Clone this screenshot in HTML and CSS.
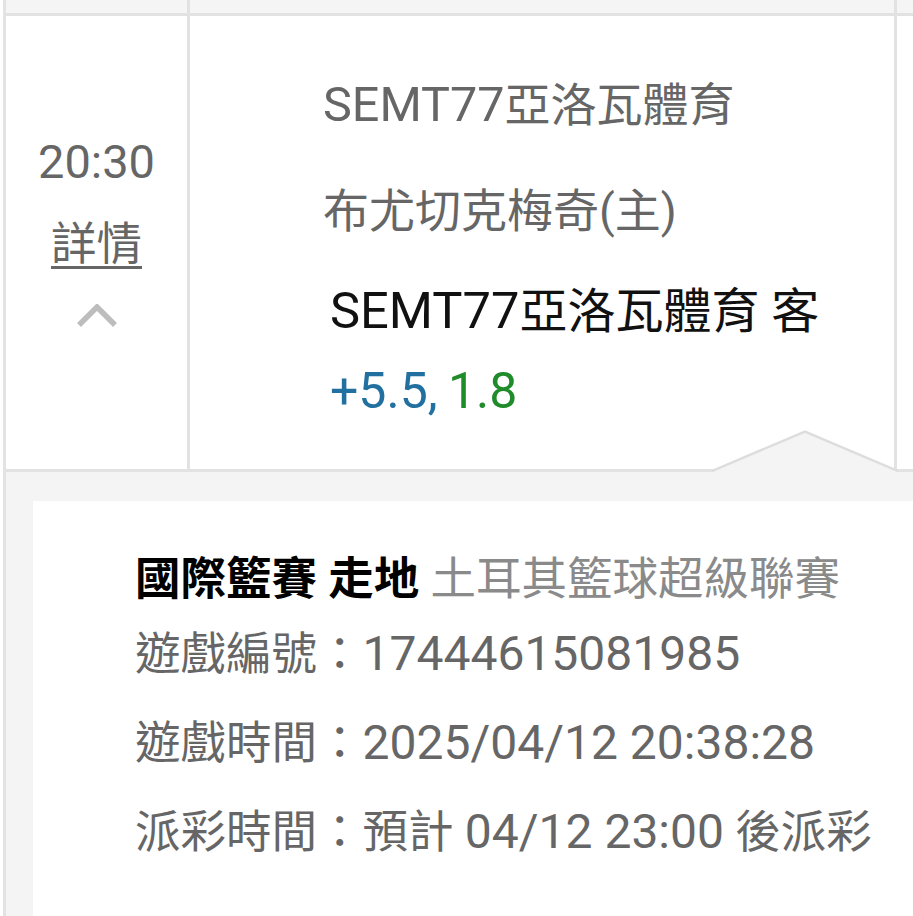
FILE: index.html
```html
<!DOCTYPE html>
<html lang="zh-TW">
<head>
    <meta charset="UTF-8">
    <meta name="viewport" content="width=device-width, initial-scale=1.0">
    <title>注單詳情</title>
    <link rel="stylesheet" href="styles.css">
</head>
<body>
    <div class="list">
        <div class="row row-prev">
            <div class="cell cell-time"></div>
            <div class="cell cell-bet"></div>
        </div>

        <div class="row row-open">
            <div class="cell cell-time">
                <div class="time">20:30</div>
                <a class="detail-link" href="#">詳情</a>
                <svg class="toggle" width="40" height="24" viewBox="0 0 40 24">
                    <polyline points="2,21 20,3 38,21" fill="none" stroke="#bdbdbd" stroke-width="5.5"/>
                </svg>
            </div>
            <div class="cell cell-bet">
                <div class="match">
                    <div class="team"><span class="lat">SEMT77</span>亞洛瓦體育</div>
                    <div class="team team-home">布尤切克梅奇(主)</div>
                </div>
                <div class="pick"><span class="lat">SEMT77</span>亞洛瓦體育 客</div>
                <div class="odds"><span class="handicap">+5.5,</span> <span class="price">1.8</span></div>
            </div>
        </div>

        <div class="detail">
            <svg class="notch" width="186" height="42" viewBox="0 0 186 42">
                <polygon points="0,42 93,1 186,42" fill="#f4f4f4"/>
                <polyline points="0,41 93,1.5 186,41" fill="none" stroke="#dddddd" stroke-width="2.5"/>
            </svg>
            <div class="detail-card">
                <div class="detail-title">
                    <b>國際籃賽 走地</b> <span class="league">土耳其籃球超級聯賽</span>
                </div>
                <div class="detail-line">遊戲編號：<span class="lat">17444615081985</span></div>
                <div class="detail-line">遊戲時間：<span class="lat">2025/04/12 20:38:28</span></div>
                <div class="detail-line">派彩時間：預計 <span class="lat">04/12 23:00</span> 後派彩</div>
            </div>
        </div>
    </div>
</body>
</html>
```

FILE: styles.css
```css
* {
    margin: 0;
    padding: 0;
    box-sizing: border-box;
}

body {
    width: 913px;
    height: 916px;
    overflow: hidden;
    background: #fff;
    font-family: Roboto, "Noto Sans CJK TC", sans-serif;
    color: #666;
}

/* latin runs render a touch larger than the CJK glyphs */
.lat {
    font-size: 1.055em;
}

.list {
    margin-left: 3px;
    border-left: 3px solid #e3e3e3;
    min-height: 916px;
    display: flex;
    flex-direction: column;
}

.row {
    display: grid;
    grid-template-columns: 184px 707px 1fr;
    border-bottom: 3px solid #e2e2e2;
}

.cell {
    border-right: 3px solid #e2e2e2;
}

.row-prev {
    height: 16px;
    background: #f5f5f5;
}

/* left column */
.row-open .cell-time {
    display: flex;
    flex-direction: column;
    align-items: center;
    padding-top: 116px;
}

.time {
    font-size: 47px;
    line-height: 60px;
}

.detail-link {
    margin-top: 23px;
    font-size: 45.5px;
    line-height: 60px;
    color: #666;
    text-decoration: underline;
    text-decoration-thickness: 3px;
    text-underline-offset: 6px;
}

.toggle {
    margin-top: 29px;
}

/* bet column */
.cell-bet {
    padding: 59px 0 48px 133px;
}

.team {
    font-size: 46px;
    line-height: 60px;
}

.team-home {
    margin-top: 46px;
}

.pick {
    margin-top: 40px;
    padding-left: 7px;
    font-size: 48px;
    line-height: 60px;
    color: #111;
}

.odds {
    margin-top: 19px;
    padding-left: 7px;
    font-size: 50px;
    line-height: 60px;
    word-spacing: -2px;
}

.handicap {
    color: #21709f;
}

.price {
    color: #1f8b2a;
}

/* expanded detail */
.detail {
    position: relative;
    flex: 1;
    background: #f4f4f4;
    padding: 29px 0 0 27px;
}

.notch {
    position: absolute;
    left: 706px;
    top: -42px;
}

.detail-card {
    background: #fff;
    padding: 49px 20px 42px 102px;
}

.detail-title {
    font-size: 45.5px;
    line-height: 60px;
    white-space: nowrap;
}

.detail-title b {
    color: #000;
    font-weight: 700;
}

.league {
    color: #8a8a8a;
}

.detail-line {
    font-size: 45.5px;
    line-height: 88px;
    white-space: nowrap;
}
```
